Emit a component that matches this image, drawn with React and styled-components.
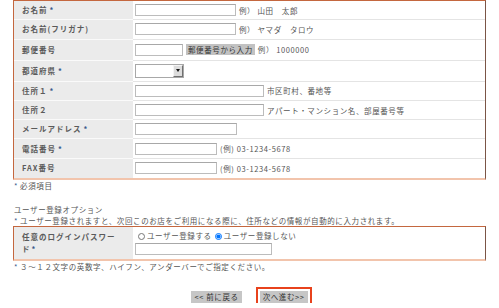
import React from 'react'
import styled, { createGlobalStyle } from "styled-components";

const rows = [
  { label: 'お名前', req: true, input: 101, hint: '例） 山田　太郎' },
  { label: 'お名前(フリガナ)', input: 101, hint: '例） ヤマダ　タロウ' },
  { label: '郵便番号', input: 48, zip: true, hint: '例） 1000000', h: 21 },
  { label: '都道府県', req: true, select: true, h: 21 },
  { label: '住所１', req: true, input: 129, hint: '市区町村、番地等' },
  { label: '住所２', input: 129, hint: 'アパート・マンション名、部屋番号等' },
  { label: 'メールアドレス', req: true, input: 102 },
  { label: '電話番号', req: true, input: 82, hint: '(例) 03-1234-5678' },
  { label: 'FAX番号', input: 82, hint: '(例) 03-1234-5678' },
];

const App = () => {
  return (
    <Page>
      <GlobalStyle />
      <FormTable>
        {rows.map((r, i) => (
          <Row key={i} $h={r.h} $last={i === rows.length - 1}>
            <Label>
              {r.label}
              {r.req && <Star>*</Star>}
            </Label>
            <Value>
              {r.select ? (
                <SelectBox>
                  <SelectField />
                  <Arrow />
                </SelectBox>
              ) : (
                <TextInput $w={r.input} />
              )}
              {r.zip && <ZipButton>郵便番号から入力</ZipButton>}
              {r.hint && <Hint>{r.hint}</Hint>}
            </Value>
          </Row>
        ))}
      </FormTable>
      <Note><Star>*</Star>必須項目</Note>

      <SectionTitle>ユーザー登録オプション</SectionTitle>
      <Note><Star>*</Star>ユーザー登録されますと、次回このお店をご利用になる際に、住所などの情報が自動的に入力されます。</Note>
      <OptionBox>
        <WrapLabel>
          <LabelLine>任意のログインパスワー</LabelLine>
          <LabelLine>ド<Star>*</Star></LabelLine>
        </WrapLabel>
        <OptionValue>
          <RadioRow>
            <Radio type="radio" name="reg" />
            <span>ユーザー登録する</span>
            <Radio type="radio" name="reg" defaultChecked />
            <span>ユーザー登録しない</span>
          </RadioRow>
          <TextInput $w={137} type="password" />
        </OptionValue>
      </OptionBox>
      <Note><Star>*</Star>３～１２文字の英数字、ハイフン、アンダーバーでご指定ください。</Note>

      <Buttons>
        <NavButton>&lt;&lt; 前に戻る</NavButton>
        <NavButton $primary>次へ進む&gt;&gt;</NavButton>
      </Buttons>
    </Page>
  );
}

const GlobalStyle = createGlobalStyle`
  body {
    margin: 0;
    background: #fff;
    font-family: "Noto Sans CJK JP", "Noto Sans", sans-serif;
    color: #555;
  }
`;

const Page = styled.div`
  padding: 0 13px;
  width: 499px;
  box-sizing: border-box;
`;

const FormTable = styled.div`
  border-top: 1px solid #c4673f;
  border-left: 1px solid #c4673f;
  border-right: 1px solid #7b5546;
  border-bottom: 2px solid #f2c4ac;
`;

const Row = styled.div`
  display: grid;
  grid-template-columns: 119px 1fr;
  height: ${p => (p.$h || 19.3)}px;
  box-sizing: border-box;
  & > * {
    border-bottom: ${p => (p.$last ? 'none' : '1px solid')};
  }
`;

const Label = styled.div`
  display: flex;
  align-items: center;
  background: #ebebeb;
  border-bottom-color: #fafafa !important;
  padding: 0 10px 0 8px;
  font-size: 7.5px;
  line-height: 12px;
  font-weight: bold;
  letter-spacing: 1px;
  color: #5a5a5a;
`;

const Star = styled.span`
  color: #3a5a8c;
  margin: 0 2px;
`;

const WrapLabel = styled.div`
  display: flex;
  flex-direction: column;
  justify-content: center;
  background: #ebebeb;
  padding: 4px 10px 4px 8px;
  font-size: 7.5px;
  line-height: 12px;
  font-weight: bold;
  letter-spacing: 1px;
  color: #5a5a5a;
  ${Star} {
    margin: 0 0 0 1px;
  }
`;

const LabelLine = styled.div`
  white-space: nowrap;
`;

const Value = styled.div`
  display: flex;
  align-items: center;
  gap: 3px;
  padding: 0 2px;
  background: #fff;
  border-bottom-color: #e4e4e4 !important;
`;

const TextInput = styled.input`
  width: ${p => p.$w}px;
  height: 12px;
  box-sizing: border-box;
  border: 1px solid #bcbcbc;
  border-top-color: #a8a8a8;
  padding: 0;
  margin: 0;
  background: #fff;
`;

const ZipButton = styled.button`
  height: 11px;
  padding: 0 2px;
  border: none;
  background: #c2c2c2;
  font-family: inherit;
  font-size: 7.5px;
  line-height: 11px;
  letter-spacing: 0.6px;
  color: #333;
`;

const Hint = styled.span`
  font-size: 7.5px;
  letter-spacing: 0.6px;
  color: #555;
  white-space: nowrap;
`;

const SelectBox = styled.div`
  display: flex;
  width: 49px;
  height: 14px;
  box-sizing: border-box;
  border: 1px solid #a8a8a8;
  background: #fff;
`;

const SelectField = styled.select`
  flex: 1;
  min-width: 0;
  appearance: none;
  border: none;
  background: transparent;
  padding: 0;
`;

const Arrow = styled.span`
  width: 10px;
  box-sizing: border-box;
  background: #dcdcdc;
  border: 1px solid;
  border-color: #f4f4f4 #707070 #707070 #f4f4f4;
  display: flex;
  align-items: center;
  justify-content: center;
  &::after {
    content: '';
    border-left: 2.5px solid transparent;
    border-right: 2.5px solid transparent;
    border-top: 3px solid #111;
  }
`;

const Note = styled.div`
  font-size: 7.5px;
  line-height: 10px;
  letter-spacing: 0.6px;
  color: #555;
  padding-left: 1px;
  margin-top: 1px;
  white-space: nowrap;
  ${Star} {
    margin: 0 2px 0 0;
  }
`;

const SectionTitle = styled.div`
  margin-top: 14px;
  font-size: 7.5px;
  line-height: 10px;
  letter-spacing: 0.6px;
  color: #555;
  padding-left: 1px;
`;

const OptionBox = styled(FormTable)`
  display: grid;
  grid-template-columns: 119px 1fr;
  margin-top: 0;
`;

const OptionValue = styled.div`
  display: flex;
  flex-direction: column;
  justify-content: center;
  gap: 2px;
  padding: 2px;
  background: #fff;
`;

const RadioRow = styled.div`
  display: flex;
  align-items: center;
  font-size: 7.5px;
  line-height: 10px;
  letter-spacing: 0.6px;
  color: #555;
`;

const Radio = styled.input`
  width: 7px;
  height: 7px;
  margin: 0 2px 0 3px;
`;

const Buttons = styled.div`
  display: flex;
  justify-content: center;
  gap: 18px;
  margin-top: 19px;
`;

const NavButton = styled.button`
  height: 12px;
  padding: 0 3px;
  border: none;
  background: #c6c6c6;
  font-family: inherit;
  font-size: 7.5px;
  line-height: 12px;
  letter-spacing: 0.6px;
  color: #333;
  outline: ${p => (p.$primary ? '2px solid #e8421c' : 'none')};
  outline-offset: 2px;
`;

export default App
